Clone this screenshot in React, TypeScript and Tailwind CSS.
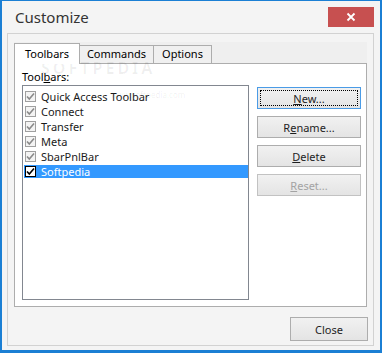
import React from "react";

const font = { fontFamily: '"Noto Sans", "Open Sans", sans-serif' };

function Check({ dark }: { dark?: boolean }) {
  return (
    <div
      className={`w-[11px] h-[11px] border flex items-center justify-center shrink-0 ${
        dark ? "border-black bg-white" : "border-[#a0a0a0] bg-[#f4f4f4]"
      }`}
    >
      <svg width="9" height="9" viewBox="0 0 9 9">
        <polyline
          points="1,4.5 3.3,7 8,1.5"
          fill="none"
          stroke={dark ? "#000" : "#8a8a8a"}
          strokeWidth="1.6"
        />
      </svg>
    </div>
  );
}

function Btn({
  children,
  focused,
  disabled,
  className = "",
}: {
  children: React.ReactNode;
  focused?: boolean;
  disabled?: boolean;
  className?: string;
}) {
  return (
    <div
      className={`relative flex items-center justify-center border text-[11px] bg-gradient-to-b from-[#f1f1f1] to-[#e4e4e4] ${
        focused ? "border-[#4a9be6]" : disabled ? "border-[#c2c2c2]" : "border-[#adadad]"
      } ${disabled ? "text-[#a3a3a3]" : "text-[#1e1e1e]"} ${className}`}
    >
      {focused && <div className="absolute inset-[2px] border border-dotted border-black" />}
      <span className="leading-none">{children}</span>
    </div>
  );
}

const rows = ["Quick Access Toolbar", "Connect", "Transfer", "Meta", "SbarPnlBar"];

export default function App() {
  return (
    <div
      style={font}
      className="w-[382px] h-[353px] bg-[#f4f4f4] border-[#1b7fd4] border-l-2 border-r-2 border-b-[3px] border-t flex flex-col overflow-hidden"
    >
      {/* Title bar */}
      <div className="h-[32px] flex items-start shrink-0">
        <div className="pl-[13px] pt-[6px] text-[15px] text-[#333] leading-[20px]">Customize</div>
        <div className="ml-auto mr-[6px] mt-[6px] w-[46px] h-[20px] bg-[#c75050] flex items-center justify-center">
          <svg width="10" height="10" viewBox="0 0 10 10">
            <path d="M1.5 1.5 L8.5 8.5 M8.5 1.5 L1.5 8.5" stroke="#fff" strokeWidth="1.8" />
          </svg>
        </div>
      </div>

      {/* Inner frame */}
      <div className="ml-[5px] mr-[6px] h-[313px] border border-[#d2d2d2] flex flex-col pt-[8px] pl-[6px] pr-[6px] relative">
        {/* Tab strip */}
        <div className="h-[21px] flex items-end bg-[#efefef] w-[353px]">
          <div className="h-[21px] w-[66px] border border-b-0 border-[#adadad] bg-white flex items-center justify-center text-[11px] text-black -mb-px relative z-10">
            Toolbars
          </div>
          <div className="h-[18px] w-[74px] border border-l-0 border-b-0 border-[#adadad] bg-[#f0f0f0] flex items-center justify-center text-[11px] text-black">
            Commands
          </div>
          <div className="h-[18px] w-[58px] border border-l-0 border-b-0 border-[#adadad] bg-[#f0f0f0] flex items-center justify-center text-[11px] text-black">
            Options
          </div>
        </div>
        {/* Panel */}
        <div className="w-[353px] h-[244px] border border-[#adadad] bg-white pl-[7px] pt-[6px] flex flex-col relative">
          <div className="text-[11px] leading-[14px] text-black">
            Tool<span className="underline">b</span>ars:
          </div>
          <div className="flex mt-[1px]">
            <div className="w-[227px] h-[215px] border border-[#828790] pl-px pt-[3px] flex flex-col">
              {rows.map((r) => (
                <div key={r} className="h-[15px] flex items-center pl-px">
                  <Check />
                  <span className="ml-[5px] text-[11px] text-[#1a1a1a] leading-none">{r}</span>
                </div>
              ))}
              <div className="h-[15px] flex items-center">
                <div className="h-[13px] w-full bg-[#3399ff] flex items-center pl-px">
                  <Check dark />
                  <span className="ml-[5px] text-[11px] text-white leading-none">Softpedia</span>
                </div>
              </div>
            </div>
            <div className="ml-[8px] mt-[2px] flex flex-col gap-[7px]">
              <Btn focused className="w-[104px] h-[22px]">
                <span className="underline">N</span>ew...
              </Btn>
              <Btn className="w-[104px] h-[22px]">
                R<span className="underline">e</span>name...
              </Btn>
              <Btn className="w-[104px] h-[22px]">
                <span className="underline">D</span>elete
              </Btn>
              <Btn disabled className="w-[104px] h-[22px]">
                <span className="underline">R</span>eset...
              </Btn>
            </div>
          </div>
          {/* watermark */}
          <div className="absolute left-[26px] top-[-4px] text-[16px] leading-none tracking-[3px] font-bold text-black/[0.06] pointer-events-none">
            SOFTPEDIA
          </div>
          <div className="absolute left-[96px] top-[27px] text-[8px] leading-none text-black/[0.07] pointer-events-none">
            www.softpedia.com
          </div>
        </div>
        <div className="flex justify-end mt-[10px]">
          <Btn className="w-[78px] h-[24px] -mr-[1px]">Close</Btn>
        </div>
      </div>
    </div>
  );
}
